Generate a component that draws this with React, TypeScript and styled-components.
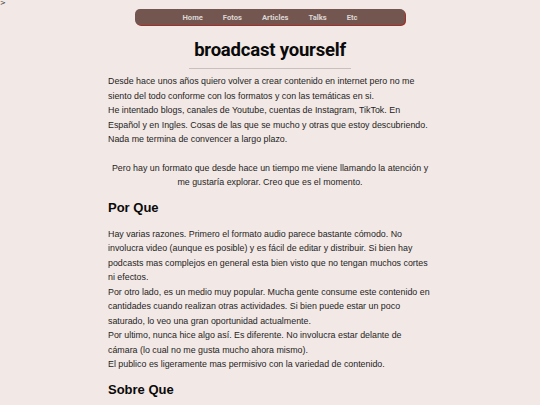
import React from "react";
import styled, { createGlobalStyle } from "styled-components";

const Global = createGlobalStyle`
  html, body { margin: 0; padding: 0; background: #f2e8e5; }
  body { font-family: "Liberation Sans", Arial, sans-serif; color: #1e1e1e; }
`;

const Stray = styled.div`
  font-family: "DejaVu Sans", sans-serif;
  font-size: 7px;
  line-height: 7px;
  height: 9px;
  color: #333;
`;

const Nav = styled.nav`
  width: 50%;
  margin: 0 auto;
  height: 16px;
  background: #735650;
  border-radius: 5px;
  box-shadow: 1px 1px 0 #a0302a;
  display: flex;
  justify-content: center;
  align-items: center;
  gap: 20px;
`;

const NavItem = styled.a`
  font-family: Roboto, sans-serif;
  font-weight: 700;
  font-size: 7.6px;
  color: #dcd6d4;
  text-decoration: none;
`;

const Main = styled.main`
  width: 60%;
  margin: 0 auto;
`;

const Title = styled.h1`
  font-family: Roboto, sans-serif;
  font-weight: 700;
  font-size: 18.5px;
  text-align: center;
  margin: 13px 0 0;
  line-height: 24px;
  color: #0a0a0a;
  letter-spacing: -0.2px;
`;

const Rule = styled.hr`
  width: 50%;
  margin: 6px auto 5px;
  border: none;
  border-top: 1px solid #c9c0bd;
`;

const Para = styled.p<{ $center?: boolean; $gap?: number }>`
  font-size: 8.87px;
  line-height: 14.5px;
  margin: ${(p) => p.$gap ?? 0}px 0 0;
  text-align: ${(p) => (p.$center ? "center" : "left")};
`;

const Heading = styled.h2<{ $top: number }>`
  font-size: 13px;
  font-weight: 700;
  margin: ${(p) => p.$top}px 0 0;
  line-height: 16px;
  color: #0a0a0a;
`;

export default function App() {
  return (
    <>
      <Global />
      <Stray>&gt;</Stray>
      <Nav>
        {["Home", "Fotos", "Articles", "Talks", "Etc"].map((t) => (
          <NavItem key={t} href="#">{t}</NavItem>
        ))}
      </Nav>
      <Main>
        <Title>broadcast yourself</Title>
        <Rule />
        <Para>
          Desde hace unos años quiero volver a crear contenido en internet pero no me siento del todo conforme con los formatos y con las temáticas en si.
          <br />
          He intentado blogs, canales de Youtube, cuentas de Instagram, TikTok. En Español y en Ingles. Cosas de las que se mucho y otras que estoy descubriendo.
          <br />
          Nada me termina de convencer a largo plazo.
        </Para>
        <Para $center $gap={14}>
          Pero hay un formato que desde hace un tiempo me viene llamando la atención y me gustaría explorar. Creo que es el momento.
        </Para>
        <Heading $top={10}>Por Que</Heading>
        <Para $gap={11}>
          Hay varias razones. Primero el formato audio parece bastante cómodo. No involucra video (aunque es posible) y es fácil de editar y distribuir. Si bien hay podcasts mas complejos en general esta bien visto que no tengan muchos cortes ni efectos.
          <br />
          Por otro lado, es un medio muy popular. Mucha gente consume este contenido en cantidades cuando realizan otras actividades. Si bien puede estar un poco saturado, lo veo una gran oportunidad actualmente.
          <br />
          Por ultimo, nunca hice algo así. Es diferente. No involucra estar delante de cámara (lo cual no me gusta mucho ahora mismo).
          <br />
          El publico es ligeramente mas permisivo con la variedad de contenido.
        </Para>
        <Heading $top={10}>Sobre Que</Heading>
      </Main>
    </>
  );
}
